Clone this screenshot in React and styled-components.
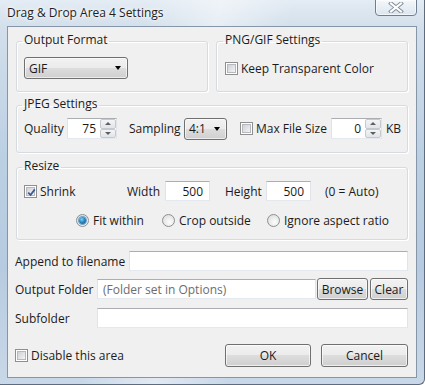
import React from "react";
import styled, { createGlobalStyle } from "styled-components";

const GlobalStyle = createGlobalStyle`
  html, body {
    margin: 0;
    padding: 0;
    overflow: hidden;
    background: #fff;
  }
  body {
    font-family: "Open Sans", "Noto Sans", sans-serif;
    font-size: 12px;
    color: #1b1b1b;
  }
`;

const Window = styled.div`
  width: 425px;
  height: 385px;
  box-sizing: border-box;
  display: flex;
  flex-direction: column;
  padding: 0 7px 6px;
  border-right: 1px solid #5d6c7e;
  border-bottom: 1px solid #5d6c7e;
  border-bottom-right-radius: 6px;
  background:
    linear-gradient(100deg, rgba(255, 255, 255, 0) 30%, rgba(255, 255, 255, 0.45) 45%, rgba(255, 255, 255, 0) 60%),
    linear-gradient(180deg, #e4ecf4 0%, #d3dfeb 7%, #bcd0e4 40%, #b7cbe0 70%, #c9d8e8 100%);
`;

const TitleBar = styled.div`
  height: 26px;
  flex: none;
  display: flex;
  justify-content: space-between;
  align-items: flex-start;
`;

const Title = styled.div`
  padding-top: 5px;
  line-height: 15px;
  color: #1e1e1e;
  text-shadow: 0 0 6px #fff, 0 0 3px #fff;
`;

const CloseBtn = styled.div`
  width: 42px;
  height: 17px;
  box-sizing: border-box;
  margin-top: -1px;
  border: 1px solid #6e7f93;
  border-radius: 0 0 4px 4px;
  background: linear-gradient(180deg, rgba(255, 255, 255, 0.6), rgba(220, 230, 240, 0.5));
  box-shadow: inset 0 0 0 1px rgba(255, 255, 255, 0.6);
  display: flex;
  align-items: center;
  justify-content: center;
`;

const Client = styled.div`
  flex: 1;
  display: flex;
  flex-direction: column;
  background: #f0f0f0;
  border: 1px solid #8596a9;
  padding: 5px 8px 0 7px;
`;

const GroupRow = styled.div`
  display: flex;
  gap: 8px;
  margin-left: 1px;
`;

const Group = styled.fieldset`
  margin: ${(p) => p.$mt || "0"} 0 0 ${(p) => (p.$inRow ? "0" : "1px")};
  padding: ${(p) => p.$pad};
  width: ${(p) => p.$w || "auto"};
  flex: ${(p) => (p.$grow ? 1 : "none")};
  min-width: 0;
  box-sizing: border-box;
  border: 1px solid #d5dbe0;
  border-radius: 3px;
  box-shadow: inset 1px 1px 0 #fff, 1px 1px 0 #fff;
`;

const Legend = styled.legend`
  margin-left: -2px;
  padding: 0 2px 3px;
  line-height: 15px;
`;

const Row = styled.div`
  display: flex;
  align-items: center;
  height: ${(p) => p.$h || "21px"};
  margin-top: ${(p) => p.$mt || "0"};
  padding-left: ${(p) => p.$pl || "0"};
`;

const Label = styled.span`
  flex: none;
  width: ${(p) => p.$w || "auto"};
  margin-left: ${(p) => p.$ml || "0"};
  white-space: nowrap;
`;

const Combo = styled.div`
  width: ${(p) => p.$w};
  height: 22px;
  flex: none;
  box-sizing: border-box;
  border: 1px solid #707070;
  border-radius: 3px;
  background: linear-gradient(180deg, #f2f2f2 0%, #ebebeb 50%, #dddddd 50%, #cfcfcf 100%);
  box-shadow: inset 0 0 0 1px rgba(255, 255, 255, 0.6);
  display: flex;
  align-items: center;
  justify-content: space-between;
  padding: 0 6px 0 4px;
`;

const Arrow = styled.span`
  width: 0;
  height: 0;
  border-left: 3.5px solid transparent;
  border-right: 3.5px solid transparent;
  border-top: 4px solid #000;
`;

const TextBox = styled.div`
  height: ${(p) => p.$h || "20px"};
  width: ${(p) => p.$w || "auto"};
  flex: ${(p) => (p.$grow ? 1 : "none")};
  box-sizing: border-box;
  background: #fff;
  border: 1px solid;
  border-color: #abadb3 #e2e3ea #e3e9ef #e2e3ea;
  display: flex;
  align-items: center;
  justify-content: ${(p) => (p.$right ? "flex-end" : "flex-start")};
  padding: 0 ${(p) => (p.$right ? "6px" : "5px")};
  color: ${(p) => (p.$muted ? "#6d6d6d" : "inherit")};
  white-space: nowrap;
`;

const Spin = styled.div`
  width: ${(p) => p.$w};
  height: 21px;
  flex: none;
  box-sizing: border-box;
  display: flex;
  background: #fff;
  border: 1px solid;
  border-color: #abadb3 #e2e3ea #e3e9ef #e2e3ea;
`;

const SpinText = styled.div`
  flex: 1;
  display: flex;
  align-items: center;
  justify-content: flex-end;
  padding-right: 4px;
`;

const SpinBtns = styled.div`
  width: 16px;
  display: flex;
  flex-direction: column;
`;

const SpinBtn = styled.div`
  flex: 1;
  box-sizing: border-box;
  border: 1px solid #c5c9d0;
  border-radius: 2px;
  background: linear-gradient(180deg, #f4f4f4, #e2e4e7);
  display: flex;
  align-items: center;
  justify-content: center;
`;

const SpinArrow = styled.span`
  width: 0;
  height: 0;
  border-left: 3px solid transparent;
  border-right: 3px solid transparent;
  ${(p) => (p.$up ? "border-bottom: 3px solid #5a5f68;" : "border-top: 3px solid #5a5f68;")}
`;

const Check = styled.label`
  display: flex;
  align-items: center;
  gap: 3px;
  flex: ${(p) => (p.$grow ? 1 : "none")};
  width: ${(p) => p.$w || "auto"};
  white-space: nowrap;
`;

const Box = styled.span`
  width: 13px;
  height: 13px;
  flex: none;
  box-sizing: border-box;
  border: 1px solid #8f8f8f;
  background: #fff;
  padding: 1px;
  display: flex;
`;

const BoxInner = styled.span`
  flex: 1;
  border: 1px solid #b5b8be;
  background: linear-gradient(135deg, #cfd1d4, #f4f4f5);
  display: flex;
  align-items: center;
  justify-content: center;
  position: relative;
`;

const Radio = styled.label`
  display: flex;
  align-items: center;
  gap: 4px;
  width: ${(p) => p.$w || "auto"};
  flex: none;
  white-space: nowrap;
`;

const RadioDot = styled.span`
  width: 13px;
  height: 13px;
  flex: none;
  box-sizing: border-box;
  border-radius: 50%;
  border: 1px solid #8f8f8f;
  background: radial-gradient(circle at 60% 65%, #fdfdfd 0%, #d6d7d9 100%);
  display: flex;
  align-items: center;
  justify-content: center;
`;

const RadioFill = styled.span`
  width: 7px;
  height: 7px;
  border-radius: 50%;
  background: radial-gradient(circle at 40% 35%, #8ad0f2 0%, #2a87c0 45%, #0d4c7a 100%);
  box-shadow: 0 0 0 1px #6ea3c8;
`;

const Button = styled.div`
  width: ${(p) => p.$w};
  height: ${(p) => p.$h || "22px"};
  flex: none;
  box-sizing: border-box;
  border: 1px solid #707070;
  border-radius: 3px;
  background: linear-gradient(180deg, #f2f2f2 0%, #ebebeb 50%, #dddddd 50%, #cfcfcf 100%);
  box-shadow: inset 0 0 0 1px rgba(255, 255, 255, 0.65);
  display: flex;
  align-items: center;
  justify-content: center;
  margin-left: ${(p) => p.$ml || "0"};
`;

const CloseGlyph = () => (
  <svg width="16" height="11" viewBox="0 0 16 11">
    <path
      d="M3 1.5 L13 9.5 M13 1.5 L3 9.5"
      stroke="#7d8a99"
      strokeWidth="4"
      strokeLinecap="square"
      fill="none"
    />
    <path
      d="M3 1.5 L13 9.5 M13 1.5 L3 9.5"
      stroke="#fff"
      strokeWidth="2.2"
      strokeLinecap="square"
      fill="none"
    />
  </svg>
);

const CheckBox = ({ checked }) => (
  <Box>
    <BoxInner>
      {checked && (
        <svg width="9" height="9" viewBox="0 0 9 9" style={{ position: "absolute", left: 0, top: 0 }}>
          <path d="M1.2 4.6 L3.6 7 L7.8 1.4" stroke="#3c5a99" strokeWidth="1.8" fill="none" />
        </svg>
      )}
    </BoxInner>
  </Box>
);

const Spinner = ({ value, w }) => (
  <Spin $w={w}>
    <SpinText>{value}</SpinText>
    <SpinBtns>
      <SpinBtn>
        <SpinArrow $up />
      </SpinBtn>
      <SpinBtn>
        <SpinArrow />
      </SpinBtn>
    </SpinBtns>
  </Spin>
);

export default function App() {
  return (
    <>
      <GlobalStyle />
      <Window>
        <TitleBar>
          <Title>Drag &amp; Drop Area 4 Settings</Title>
          <CloseBtn>
            <CloseGlyph />
          </CloseBtn>
        </TitleBar>
        <Client>
          <GroupRow>
            <Group $inRow $w="192px" $pad="7px 7px 12px">
              <Legend>Output Format</Legend>
              <Combo $w="104px">
                <span>GIF</span>
                <Arrow />
              </Combo>
            </Group>
            <Group $inRow $grow $pad="9px 8px 14px">
              <Legend>PNG/GIF Settings</Legend>
              <Row $h="18px">
                <Check>
                  <CheckBox />
                  Keep Transparent Color
                </Check>
              </Row>
            </Group>
          </GroupRow>

          <Group $mt="4px" $pad="4px 7px 13px">
            <Legend>JPEG Settings</Legend>
            <Row>
              <Label $w="43px">Quality</Label>
              <Spinner value="75" w="50px" />
              <Label $w="55px" $ml="12px">Sampling</Label>
              <Combo $w="43px">
                <span>4:1</span>
                <Arrow />
              </Combo>
              <Check $w="91px" style={{ marginLeft: "13px" }}>
                <CheckBox />
                Max File Size
              </Check>
              <Spinner value="0" w="51px" />
              <Label $ml="4px">KB</Label>
            </Row>
          </Group>

          <Group $mt="5px" $pad="5px 7px 11px">
            <Legend>Resize</Legend>
            <Row $h="20px">
              <Check $w="103px">
                <CheckBox checked />
                Shrink
              </Check>
              <Label $w="38px">Width</Label>
              <TextBox $w="45px" $right>500</TextBox>
              <Label $w="41px" $ml="15px">Height</Label>
              <TextBox $w="45px" $right>500</TextBox>
              <Label $ml="14px">(0 = Auto)</Label>
            </Row>
            <Row $h="16px" $mt="11px" $pl="52px">
              <Radio $w="86px">
                <RadioDot>
                  <RadioFill />
                </RadioDot>
                Fit within
              </Radio>
              <Radio $w="105px">
                <RadioDot />
                Crop outside
              </Radio>
              <Radio>
                <RadioDot />
                Ignore aspect ratio
              </Radio>
            </Row>
          </Group>

          <Row $h="20px" $mt="11px">
            <Label $w="114px">Append to filename</Label>
            <TextBox $grow />
          </Row>
          <Row $h="22px" $mt="7px">
            <Label $w="82px">Output Folder</Label>
            <TextBox $grow $muted>(Folder set in Options)</TextBox>
            <Button $w="51px" $ml="1px">Browse</Button>
            <Button $w="38px" $ml="2px">Clear</Button>
          </Row>
          <Row $h="20px" $mt="8px">
            <Label $w="82px">Subfolder</Label>
            <TextBox $grow />
          </Row>
          <Row $h="23px" $mt="16px">
            <Check $grow>
              <CheckBox />
              Disable this area
            </Check>
            <Button $w="86px" $h="23px">OK</Button>
            <Button $w="87px" $h="23px" $ml="10px">Cancel</Button>
          </Row>
        </Client>
      </Window>
    </>
  );
}
